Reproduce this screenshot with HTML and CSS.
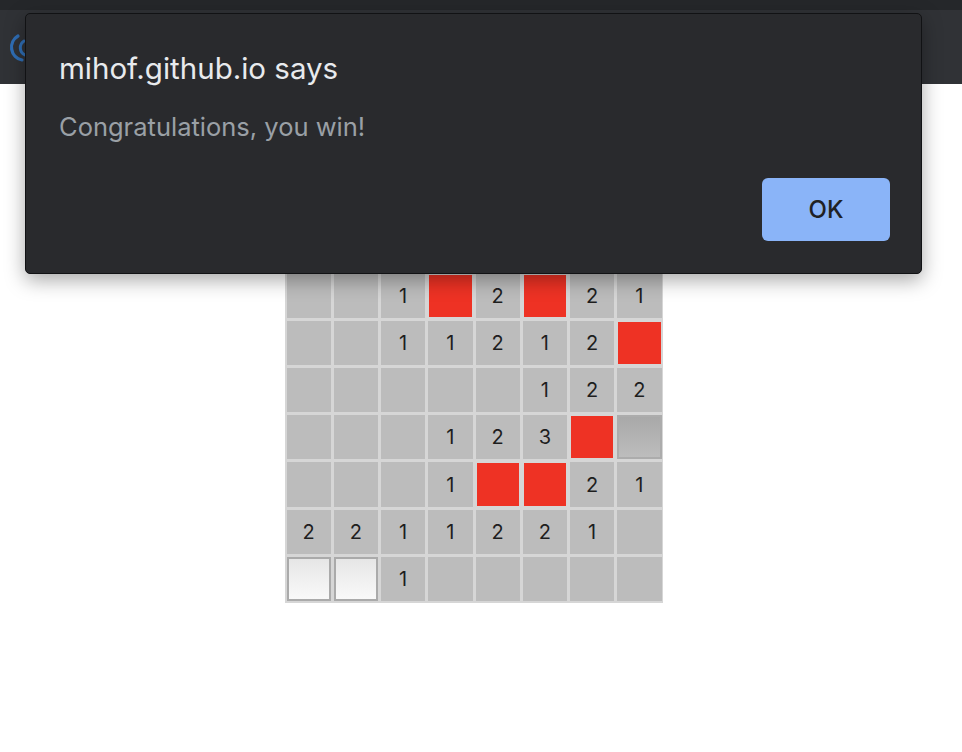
FILE: index.html
```html
<!DOCTYPE html>
<html>
<head>
<meta charset="utf-8">
<link rel="stylesheet" href="styles.css">
</head>
<body>
<header class="chrome">
  <div class="strip"></div>
  <div class="bar">
    <svg class="logo" width="30" height="30" viewBox="0 0 30 30">
      <path d="M9 3 A13 13 0 0 0 13 27" fill="none" stroke="#2f6eb5" stroke-width="3.2" stroke-linecap="round"/>
      <path d="M15 8 A8 8 0 0 0 16 22" fill="none" stroke="#2f6eb5" stroke-width="3" stroke-linecap="round"/>
    </svg>
  </div>
</header>
<main class="page">
  <div class="board">
    <div class="cell"></div><div class="cell"></div><div class="cell"></div><div class="cell">1</div><div class="cell">1</div><div class="cell">1</div><div class="cell">1</div><div class="cell">1</div>
    <div class="cell"></div><div class="cell"></div><div class="cell">1</div><div class="cell mine"></div><div class="cell">2</div><div class="cell mine"></div><div class="cell">2</div><div class="cell">1</div>
    <div class="cell"></div><div class="cell"></div><div class="cell">1</div><div class="cell">1</div><div class="cell">2</div><div class="cell">1</div><div class="cell">2</div><div class="cell mine"></div>
    <div class="cell"></div><div class="cell"></div><div class="cell"></div><div class="cell"></div><div class="cell"></div><div class="cell">1</div><div class="cell">2</div><div class="cell">2</div>
    <div class="cell"></div><div class="cell"></div><div class="cell"></div><div class="cell">1</div><div class="cell">2</div><div class="cell">3</div><div class="cell mine"></div><div class="cell hidden-gray"></div>
    <div class="cell"></div><div class="cell"></div><div class="cell"></div><div class="cell">1</div><div class="cell mine"></div><div class="cell mine"></div><div class="cell">2</div><div class="cell">1</div>
    <div class="cell">2</div><div class="cell">2</div><div class="cell">1</div><div class="cell">1</div><div class="cell">2</div><div class="cell">2</div><div class="cell">1</div><div class="cell"></div>
    <div class="cell hidden-white"></div><div class="cell hidden-white"></div><div class="cell">1</div><div class="cell"></div><div class="cell"></div><div class="cell"></div><div class="cell"></div><div class="cell"></div>
  </div>
</main>
<div class="dialog">
  <div class="dialog-title">mihof.github.io says</div>
  <div class="dialog-msg">Congratulations, you win!</div>
  <div class="dialog-actions">
    <button class="ok">OK</button>
  </div>
</div>
</body>
</html>
```

FILE: styles.css
```css
html, body {
  margin: 0;
  padding: 0;
  background: #ffffff;
  font-family: Inter, "Noto Sans", "Liberation Sans", sans-serif;
}

.chrome .strip {
  height: 10px;
  background: #25272a;
}

.chrome .bar {
  height: 74px;
  background: #303236;
  display: flex;
  align-items: center;
  padding-left: 9px;
}

.logo {
  display: block;
  margin-top: 1px;
}

.page {
  display: flex;
  justify-content: center;
  padding-right: 14px;
  padding-top: 141px;
}

.board {
  display: grid;
  grid-template-columns: repeat(8, 44.25px);
  grid-auto-rows: 44.2px;
  gap: 3px;
  padding: 1.5px;
  background: #d6d6d6;
}

.cell {
  background: #bcbcbc;
  display: flex;
  align-items: center;
  justify-content: center;
  font-size: 20px;
  color: #1e1e1e;
  box-sizing: border-box;
}

.cell.mine {
  background: #ee3224;
  border: 1px solid #d6d6d6;
}

.cell.hidden-gray {
  border: 2px solid #acacac;
  background: linear-gradient(#a9a9a9, #bdbdbd);
}

.cell.hidden-white {
  border: 2px solid #aaaaaa;
  background: linear-gradient(#e6e6e6, #f9f9f9);
}

.dialog {
  position: absolute;
  left: 25px;
  top: 13px;
  width: 897px;
  height: 261px;
  box-sizing: border-box;
  background: #292a2d;
  border: 1px solid #111214;
  border-radius: 5px;
  box-shadow: 0 6px 20px rgba(0, 0, 0, 0.35);
  padding: 37px 31px 0 33px;
  display: flex;
  flex-direction: column;
}

.dialog-title {
  color: #e8eaed;
  font-size: 29.5px;
  line-height: 34px;
}

.dialog-msg {
  color: #9aa0a6;
  font-size: 25.5px;
  line-height: 30px;
  margin-top: 27px;
}

.dialog-actions {
  display: flex;
  justify-content: flex-end;
  margin-top: 36px;
}

.ok {
  width: 128px;
  height: 63px;
  border: none;
  border-radius: 6px;
  background: #8ab4f8;
  color: #202124;
  font-family: Inter, "Noto Sans", "Liberation Sans", sans-serif;
  font-size: 24px;
  font-weight: 500;
  padding: 0;
}
```
